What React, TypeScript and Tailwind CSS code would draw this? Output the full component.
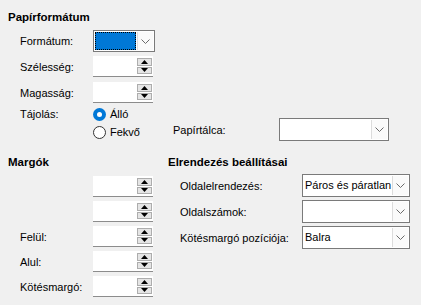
const font = { fontFamily: '"Liberation Sans", Arial, sans-serif' }

const Chevron = () => (
  <svg width="9" height="5" viewBox="0 0 9 5" className="block">
    <polyline points="0.5,0.5 4.5,4.5 8.5,0.5" fill="none" stroke="#6a6a6a" strokeWidth="1" />
  </svg>
)

const Arrow = ({ up }: { up?: boolean }) => (
  <svg width="7" height="4" viewBox="0 0 7 4" className="block">
    <polygon points={up ? '3.5,0 7,4 0,4' : '0,0 7,0 3.5,4'} fill="#000" />
  </svg>
)

const Spinner = () => (
  <div className="flex h-[21px] w-[60px] border-b border-[#8c8c8c] bg-white">
    <div className="flex-1" />
    <div className="my-[2px] mr-[1px] flex w-[15px] flex-col gap-[1px]">
      <div className="flex flex-1 items-center justify-center border border-[#adadad] bg-[#e5e5e5]">
        <Arrow up />
      </div>
      <div className="flex flex-1 items-center justify-center border border-[#adadad] bg-[#e5e5e5]">
        <Arrow />
      </div>
    </div>
  </div>
)

const Combo = ({ value = '', width }: { value?: string; width: string }) => (
  <div className={`flex h-[23px] ${width} border border-[#7a7a7a] bg-white`}>
    <div className="flex-1 overflow-hidden whitespace-nowrap pl-[2px] leading-[21px]">{value}</div>
    <div className="my-[1px] mr-[1px] flex w-[16px] items-center justify-center border-l border-[#dcdcdc] bg-[#fafafa]">
      <Chevron />
    </div>
  </div>
)

const Radio = ({ checked, label }: { checked?: boolean; label: string }) => (
  <div className="flex h-[16px] items-center gap-[4px]">
    {checked ? (
      <div className="flex h-[13px] w-[13px] items-center justify-center rounded-full bg-[#0078d7]">
        <div className="h-[5px] w-[5px] rounded-full bg-white" />
      </div>
    ) : (
      <div className="h-[13px] w-[13px] rounded-full border border-[#333333] bg-white" />
    )}
    <span>{label}</span>
  </div>
)

const Row = ({ label, children, className = '' }: { label: string; children: React.ReactNode; className?: string }) => (
  <div className={`flex items-center ${className}`}>
    <div className="w-[73px] pl-[12px] box-content">{label}</div>
    {children}
  </div>
)

export default function App() {
  return (
    <div
      style={font}
      className="h-[305px] w-[421px] overflow-hidden bg-[#f0f0f0] pl-[8px] pt-[9px] text-[11px] leading-[16px] text-black"
    >
      <div className="h-[17px] text-[11.5px] font-bold">Papírformátum</div>

      <Row label="Formátum:" className="mt-[4px]">
        <div className="flex h-[22px] w-[62px] border border-[#7a7a7a] bg-white">
          <div className="m-[1px] flex-1 border border-dotted border-black bg-[#0078d7]" />
          <div className="my-[1px] mr-[1px] flex w-[16px] items-center justify-center border-l border-[#dcdcdc] bg-[#fafafa]">
            <Chevron />
          </div>
        </div>
      </Row>

      <Row label="Szélesség:" className="mt-[4px]">
        <Spinner />
      </Row>

      <Row label="Magasság:" className="mt-[5px]">
        <Spinner />
      </Row>

      <div className="mt-[3px] flex items-start">
        <div className="w-[73px] pl-[12px] box-content leading-[16px]">Tájolás:</div>
        <div className="flex w-[80px] flex-col gap-[2px]">
          <Radio checked label="Álló" />
          <Radio label="Fekvő" />
        </div>
        <div className="mt-[12px] flex items-center">
          <div className="w-[106px]">Papírtálca:</div>
          <Combo width="w-[110px]" />
        </div>
      </div>

      <div className="mt-[13px] flex">
        <div className="w-[160px]">
          <div className="h-[16px] text-[11.5px] font-bold">Margók</div>
          <div className="mt-[6px] flex flex-col gap-[4px]">
            <Row label="">
              <Spinner />
            </Row>
            <Row label="">
              <Spinner />
            </Row>
            <Row label="Felül:">
              <Spinner />
            </Row>
            <Row label="Alul:">
              <Spinner />
            </Row>
            <Row label="Kötésmargó:">
              <Spinner />
            </Row>
          </div>
        </div>

        <div>
          <div className="h-[16px] text-[11.5px] font-bold">Elrendezés beállításai</div>
          <div className="mt-[4px] flex flex-col gap-[3px]">
            <div className="flex items-center">
              <div className="w-[122px] pl-[12px] box-content">Oldalelrendezés:</div>
              <Combo width="w-[108px]" value="Páros és páratlan" />
            </div>
            <div className="flex items-center">
              <div className="w-[122px] pl-[12px] box-content">Oldalszámok:</div>
              <Combo width="w-[108px]" />
            </div>
            <div className="flex items-center">
              <div className="w-[122px] pl-[12px] box-content">Kötésmargó pozíciója:</div>
              <Combo width="w-[108px]" value="Balra" />
            </div>
          </div>
        </div>
      </div>
    </div>
  )
}
